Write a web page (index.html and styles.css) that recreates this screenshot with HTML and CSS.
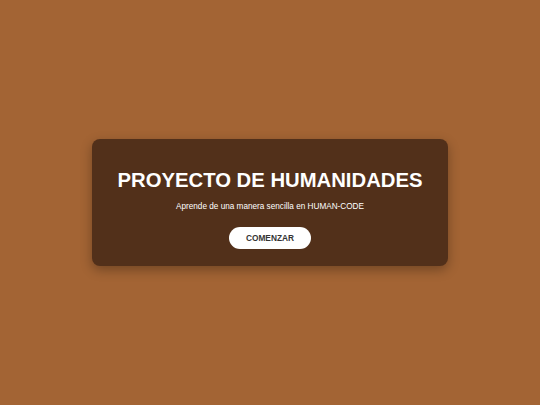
FILE: index.html
```html
<!DOCTYPE html>
<html lang="es">
<head>
<meta charset="utf-8">
<title>Proyecto de Humanidades</title>
<link rel="stylesheet" href="styles.css">
</head>
<body>
<main class="hero">
  <section class="card">
    <h1 class="title">PROYECTO DE HUMANIDADES</h1>
    <p class="subtitle">Aprende de una manera sencilla en HUMAN-CODE</p>
    <button class="btn" type="button">COMENZAR</button>
  </section>
</main>
</body>
</html>
```
FILE: styles.css
```css
html, body {
  margin: 0;
  padding: 0;
}
body {
  background: #a36434;
  font-family: "Liberation Sans", Arial, sans-serif;
}
.hero {
  height: 100vh;
  display: flex;
  align-items: center;
  justify-content: center;
}
.card {
  background: #52301a;
  border-radius: 8px;
  padding: 29px 25.5px 17px;
  display: flex;
  flex-direction: column;
  align-items: center;
  box-shadow: 0 4px 12px rgba(0, 0, 0, 0.3);
  color: #fff;
}
.title {
  margin: 0;
  font-size: 20.3px;
  font-weight: bold;
  line-height: 24px;
}
.subtitle {
  margin: 10px 0 15px;
  font-size: 8.2px;
  line-height: 10px;
}
.btn {
  border: none;
  background: #fff;
  color: #333;
  font-family: inherit;
  font-weight: bold;
  font-size: 8.3px;
  width: 82.5px;
  height: 21.5px;
  border-radius: 11px;
  padding: 0;
}
```
